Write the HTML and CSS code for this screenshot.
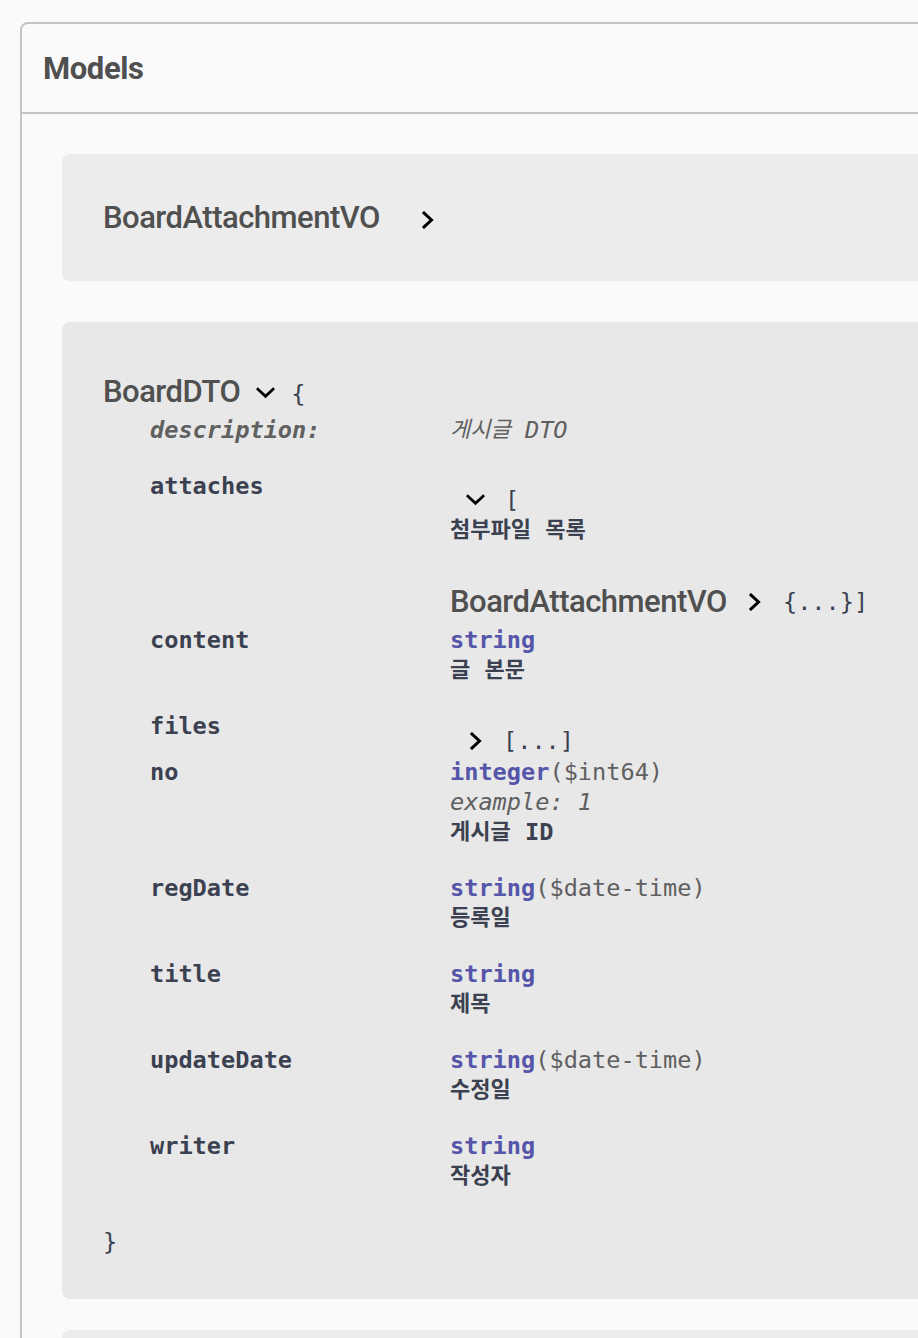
FILE: index.html
```html
<!DOCTYPE html>
<html lang="ko">
<head>
<meta charset="utf-8">
<title>Models</title>
<link rel="stylesheet" href="styles.css">
</head>
<body>
<div class="page">
  <section class="models">
    <h4 class="models-head">Models</h4>
    <div class="models-body">
      <div class="model-container collapsed">
        <span class="model-title">BoardAttachmentVO</span>
        <svg class="icon-right big-gap" viewBox="0 0 12 18" width="12" height="18"><polyline points="2,2 9.5,9 2,16"/></svg>
      </div>

      <div class="model-container expanded">
        <div class="title-line">
          <span class="model-title">BoardDTO</span>
          <svg class="icon-down" viewBox="0 0 20 12" width="19" height="12"><polyline points="2,2 10,9.5 18,2"/></svg>
          <span class="brace">{</span>
        </div>

        <div class="props">
          <div class="row row-desc">
            <div class="name italic">description:</div>
            <div class="val italic light"><span class="ko">게시글</span> DTO</div>
          </div>

          <div class="row row-attaches">
            <div class="name">attaches</div>
            <div class="val offset">
              <div class="line"><svg class="icon-down small" viewBox="0 0 20 12" width="19" height="12"><polyline points="2,2 10,9.5 18,2"/></svg><span class="brace">[</span></div>
              <div class="line text"><span class="ko">첨부파일</span> <span class="ko">목록</span></div>
              <div class="ref-line">
                <span class="model-title">BoardAttachmentVO</span>
                <svg class="icon-right" viewBox="0 0 12 18" width="12" height="18"><polyline points="2,2 9.5,9 2,16"/></svg>
                <span class="brace">{...}]</span>
              </div>
            </div>
          </div>

          <div class="row">
            <div class="name">content</div>
            <div class="val">
              <div class="line"><span class="type">string</span></div>
              <div class="line text"><span class="ko">글</span> <span class="ko">본문</span></div>
            </div>
          </div>

          <div class="row row-files">
            <div class="name">files</div>
            <div class="val offset-files">
              <div class="line"><svg class="icon-right files-arrow" viewBox="0 0 12 18" width="12" height="18"><polyline points="2,2 9.5,9 2,16"/></svg><span class="brace">[...]</span></div>
            </div>
          </div>

          <div class="row">
            <div class="name">no</div>
            <div class="val">
              <div class="line"><span class="type">integer</span><span class="format">($int64)</span></div>
              <div class="line italic example">example: 1</div>
              <div class="line text"><span class="ko">게시글</span> ID</div>
            </div>
          </div>

          <div class="row">
            <div class="name">regDate</div>
            <div class="val">
              <div class="line"><span class="type">string</span><span class="format">($date-time)</span></div>
              <div class="line text"><span class="ko">등록일</span></div>
            </div>
          </div>

          <div class="row">
            <div class="name">title</div>
            <div class="val">
              <div class="line"><span class="type">string</span></div>
              <div class="line text"><span class="ko">제목</span></div>
            </div>
          </div>

          <div class="row">
            <div class="name">updateDate</div>
            <div class="val">
              <div class="line"><span class="type">string</span><span class="format">($date-time)</span></div>
              <div class="line text"><span class="ko">수정일</span></div>
            </div>
          </div>

          <div class="row row-last">
            <div class="name">writer</div>
            <div class="val">
              <div class="line"><span class="type">string</span></div>
              <div class="line text"><span class="ko">작성자</span></div>
            </div>
          </div>
        </div>

        <div class="close-brace">}</div>
      </div>

      <div class="model-container collapsed next"></div>
    </div>
  </section>
</div>
</body>
</html>
```

FILE: styles.css
```css
html, body {
  margin: 0;
  padding: 0;
  background: #fafafa;
  overflow: hidden;
}

.page {
  padding: 22px 0 0 20px;
  width: 1200px;
}

.models {
  width: 1100px;
  border: 2px solid #c3c4c8;
  border-radius: 8px;
  box-sizing: border-box;
}

.models-head {
  margin: 0;
  height: 88px;
  padding: 0 21px;
  display: flex;
  align-items: center;
  border-bottom: 2px solid #c3c4c8;
  font-family: Roboto, "Open Sans", sans-serif;
  font-weight: 700;
  font-size: 31px;
  color: #505050;
  letter-spacing: -0.4px;
}

.models-body {
  padding: 40px 0 0 40px;
}

.model-container {
  border-radius: 8px;
  background: #ececec;
  margin-bottom: 41px;
}

.model-container.collapsed {
  height: 127px;
  box-sizing: border-box;
  padding-left: 41px;
  display: flex;
  align-items: center;
}

.model-container.next {
  height: 60px;
}

.model-title {
  font-family: Roboto, "Open Sans", sans-serif;
  font-weight: 500;
  font-size: 31px;
  letter-spacing: -0.5px;
  color: #505050;
  line-height: 40px;
}

svg polyline {
  fill: none;
  stroke: #000;
  stroke-width: 3;
  stroke-linecap: square;
  stroke-linejoin: miter;
}

.icon-right.big-gap {
  margin-left: 42px;
  margin-top: 4px;
}

.model-container.expanded {
  background: #e8e8e8;
  padding: 50px 0 42px 41px;
  margin-bottom: 31px;
  font-family: "DejaVu Sans Mono", "Liberation Mono", monospace;
  font-size: 23.6px;
  font-weight: 700;
  color: #3b4151;
}

.title-line {
  display: flex;
  align-items: center;
  height: 40px;
}

.icon-down {
  margin-left: 16px;
  margin-top: 2px;
}

.brace {
  font-weight: 400;
  color: #3b4151;
}

.title-line .brace {
  margin-left: 16px;
  margin-top: 4px;
}

.props {
  display: flex;
  flex-direction: column;
  padding-left: 47px;
}

.row {
  display: grid;
  grid-template-columns: 300px 1fr;
  padding-bottom: 26px;
}

.name, .line {
  line-height: 30px;
  height: 30px;
  white-space: nowrap;
}

.italic {
  font-style: italic;
  color: #606060;
}

.val.light {
  font-weight: 400;
  line-height: 30px;
  height: 30px;
  white-space: nowrap;
}

.row-desc {
  padding-top: 3px;
}

.ko {
  font-family: "Noto Sans CJK KR", sans-serif;
  font-size: 22px;
  font-weight: 700;
  line-height: 1;
  vertical-align: 1px;
}

.val.light .ko {
  font-weight: 400;
}

.val.offset {
  padding-top: 14px;
}

.val.offset .line:first-child {
  display: flex;
  align-items: center;
}

.icon-down.small {
  margin-left: 16px;
  margin-right: 20px;
  margin-top: 0;
}

.ref-line {
  margin-top: 37px;
  height: 40px;
  display: flex;
  align-items: center;
}

.ref-line .icon-right {
  margin-left: 22px;
  margin-right: 22px;
}

.row-attaches {
  padding-bottom: 3px;
}

.row-files {
  padding-bottom: 1px;
}

.val.offset-files {
  padding-top: 15px;
}

.val.offset-files .line {
  display: flex;
  align-items: center;
}

.files-arrow {
  margin-left: 20px;
  margin-right: 21px;
}

.type {
  color: #5555aa;
}

.format {
  color: #606060;
  font-weight: 400;
}

.example {
  font-weight: 400;
}

.row-last {
  padding-bottom: 36px;
}

.close-brace {
  font-weight: 400;
  line-height: 30px;
  height: 30px;
}
```
